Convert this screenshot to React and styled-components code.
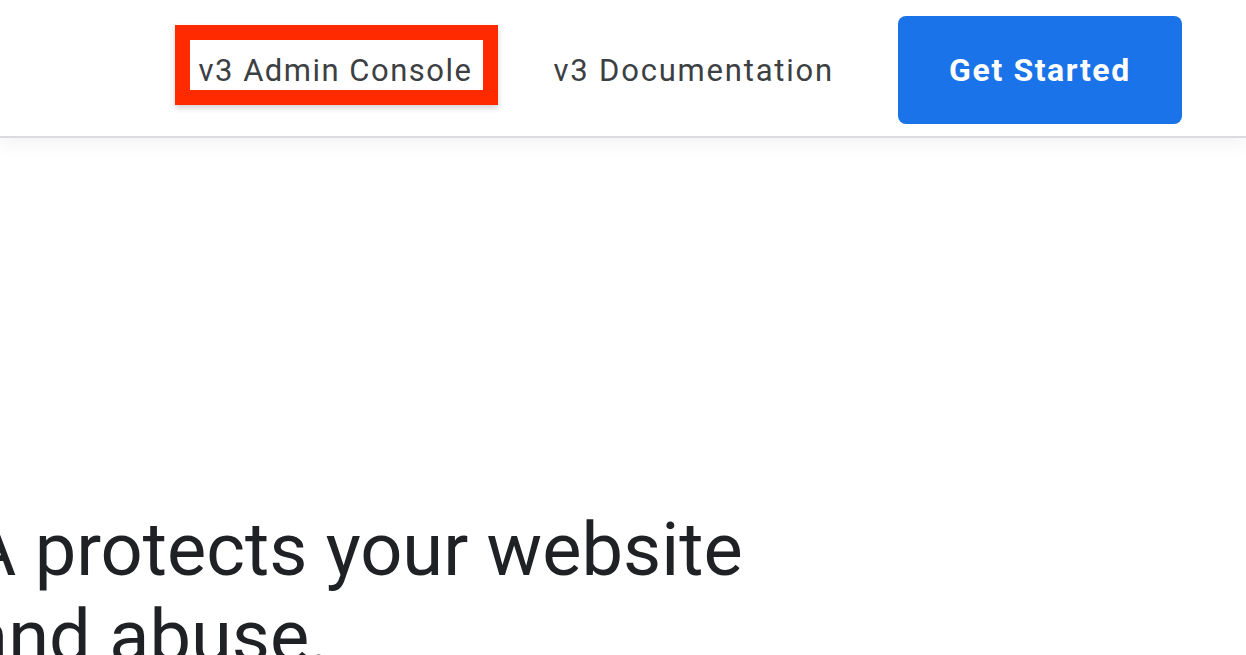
import React from "react";
import styled, { createGlobalStyle } from "styled-components";

const GlobalStyle = createGlobalStyle`
  html, body {
    margin: 0;
    padding: 0;
    background: #fff;
    overflow: hidden;
  }
  body {
    font-family: "Roboto", "Open Sans", "Liberation Sans", sans-serif;
  }
`;

/* barra do topo */
const Header = styled.header`
  height: 136px;
  display: flex;
  align-items: center;
  justify-content: flex-end;
  padding-right: 64px;
  border-bottom: 2px solid #dadce0;
  box-shadow: 0 4px 18px rgba(60, 64, 67, 0.08);
  position: relative;
  z-index: 1;
`;

const Nav = styled.nav`
  display: flex;
  align-items: center;
`;

/* link normal do menu */
const NavLink = styled.a`
  font-size: 31px;
  line-height: 36px;
  letter-spacing: 1.8px;
  color: #3c4043;
  text-decoration: none;
  margin: 6px 64px 0 0;
`;

/* link destacado com a moldura vermelha */
const MarkedLink = styled(NavLink)`
  letter-spacing: 1.5px;
  padding: 13px 10px 1px 9px;
  margin: 0 56px 7px 0;
  border: 15px solid #ff2a00;
  box-shadow: 0 3px 6px rgba(0, 0, 0, 0.18);
`;

const StartButton = styled.button`
  width: 284px;
  height: 108px;
  margin-top: 4px;
  background: #1a73e8;
  color: #fff;
  border: none;
  border-radius: 8px;
  font-family: inherit;
  font-size: 32px;
  font-weight: 700;
  letter-spacing: 1.6px;
`;

const Hero = styled.main`
  padding-top: 368px;
`;

const Title = styled.h1`
  margin: 0 0 0 -32px;
  font-size: 74px;
  font-weight: 400;
  line-height: 87px;
  color: #202124;
  white-space: nowrap;
`;

export default function App() {
  return (
    <>
      <GlobalStyle />
      <Header>
        <Nav>
          <MarkedLink href="#">v3 Admin Console</MarkedLink>
          <NavLink href="#">v3 Documentation</NavLink>
          <StartButton>Get Started</StartButton>
        </Nav>
      </Header>
      <Hero>
        <Title>
          A protects your website
          <br />
          and abuse.
        </Title>
      </Hero>
    </>
  );
}
